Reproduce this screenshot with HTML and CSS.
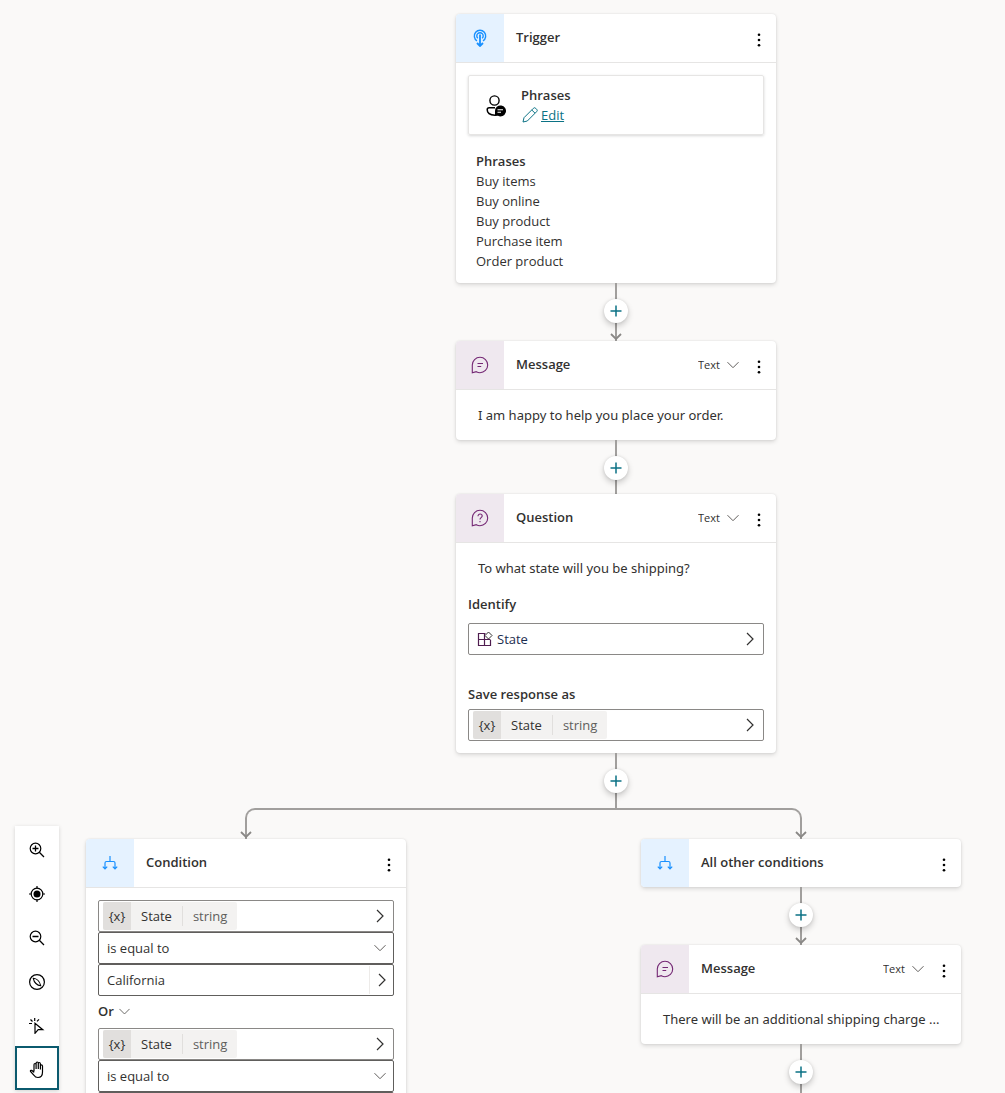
FILE: index.html
```html
<!DOCTYPE html>
<html lang="en">
<head>
<meta charset="utf-8">
<meta name="viewport" content="width=device-width, initial-scale=1">
<title>Topic authoring canvas</title>
<link rel="stylesheet" href="styles.css">
</head>
<body>
<svg class="sprite" aria-hidden="true">
  <symbol id="more" viewBox="0 0 16 16"><circle cx="8" cy="2" r="1.5"/><circle cx="8" cy="8" r="1.5"/><circle cx="8" cy="14" r="1.5"/></symbol>
  <symbol id="down" viewBox="0 0 12 12"><path d="M.5 3.200 6 8.700l5.500-5.500" fill="none" stroke="currentColor"/></symbol>
  <symbol id="right" viewBox="0 0 14 14"><path d="M4 1l6 6-6 6" fill="none" stroke="currentColor" stroke-width="1.200"/></symbol>
  <symbol id="plus" viewBox="0 0 12 12"><path d="M6 .5v11M.5 6h11" fill="none" stroke="currentColor" stroke-width="1.500"/></symbol>
  <symbol id="arrowhead" viewBox="0 0 12 8"><path d="M1 1l5 5 5-5" fill="none" stroke="currentColor" stroke-width="1.800"/></symbol>
  <symbol id="message" viewBox="0 0 18 18"><path d="M1.300 16.700V9A7.700 7.700 0 1 1 9 16.700c-1.400 0-2.600-.4-3.700-1zM6.500 7.500h5.500M6.500 10.500h3.700" fill="none" stroke="currentColor" stroke-width="1.100"/></symbol>
  <symbol id="question" viewBox="0 0 18 18"><path d="M1.300 16.700V9A7.700 7.700 0 1 1 9 16.700c-1.400 0-2.600-.4-3.700-1zM7 7.200c0-3 4.200-2.600 4.200-.2C11.200 8.700 9 8.700 9 10.500M9 12v1.300" fill="none" stroke="currentColor" stroke-width="1.100"/></symbol>
  <symbol id="branch" viewBox="0 0 18 18"><path d="M9 2v5.500M4 14.500V9q0-1.500 1.500-1.500h7Q14 7.500 14 9v5.500M1.800 12.600 4 14.800l2.200-2.200M11.800 12.600l2.200 2.200 2.200-2.200" fill="none" stroke="currentColor" stroke-width="1.200"/></symbol>
  <symbol id="trigger" viewBox="0 0 14 18"><path d="M4 11.800a5.700 5.700 0 1 1 6 0M4.800 9.200a3.200 3.200 0 1 1 4.400 0" fill="none" stroke="currentColor" stroke-width="1.400"/><path d="M7 5.500v10.800M4 14l3 3 3-3" fill="none" stroke="currentColor" stroke-width="1.800"/></symbol>
  <symbol id="person" viewBox="0 0 20 22"><circle cx="8.500" cy="5.500" r="4.600" fill="none" stroke="currentColor" stroke-width="1.400"/><path d="M9 12.800H3.200q-2 0-2 2c0 3.500 3.300 5.200 7.800 5.400" fill="none" stroke="currentColor" stroke-width="1.500"/><path d="M9 21v-5a5.500 5.500 0 1 1 3 4.800z" fill="currentColor"/><path d="M11.500 14.800H17M11.500 17.200h3.500" stroke="#fff" stroke-width="1.100"/></symbol>
  <symbol id="pencil" viewBox="0 0 16 16"><path d="M1 15l1-4.300L11.300 1.400a1.700 1.700 0 0 1 2.500 0l.8.800a1.700 1.700 0 0 1 0 2.500L5.300 14zM9.800 3l3.200 3.200" fill="none" stroke="currentColor"/></symbol>
  <symbol id="entity" viewBox="0 0 16 16"><path d="M8.500 2.500H1.500v12h12V9M7.500 2.500v12M1.500 8.500h12" fill="none" stroke="#4f1d4f" stroke-width="1.200"/><path d="M11.500 1l3.500 3.500L11.500 8 8 4.500z" fill="#fff" stroke="#323130"/></symbol>
  <symbol id="zoomin" viewBox="0 0 16 16"><circle cx="6.500" cy="6.500" r="5.300" fill="none" stroke="currentColor" stroke-width="1.200"/><path d="M10.300 10.300 15 15M6.500 3.500v6M3.500 6.500h6" stroke="currentColor" stroke-width="1.300"/></symbol>
  <symbol id="zoomout" viewBox="0 0 16 16"><circle cx="6.500" cy="6.500" r="5.300" fill="none" stroke="currentColor" stroke-width="1.200"/><path d="M10.300 10.300 15 15M3.500 6.500h6" stroke="currentColor" stroke-width="1.300"/></symbol>
  <symbol id="target" viewBox="0 0 16 16"><circle cx="8" cy="8" r="5.800" fill="none" stroke="currentColor" stroke-width="1.200"/><circle cx="8" cy="8" r="3.500"/><path d="M8 0v2.500M8 13.500V16M0 8h2.500M13.500 8H16" stroke="currentColor" stroke-width="1.200"/></symbol>
  <symbol id="compass" viewBox="0 0 16 16"><circle cx="8" cy="8" r="7.400" fill="none" stroke="currentColor" stroke-width="1.200"/><path d="M4.300 4.300c3.200.2 6.500 3 7.400 7.400-3.500-.2-6.700-3.200-7.400-7.400z" fill="none" stroke="currentColor" stroke-width="1.100"/></symbol>
  <symbol id="cursor" viewBox="0 0 16 16"><path d="M6 5.300v10l3.200-3.600h4.600zM5.700 0v3M0 5.500h3M1.500 1.500l2 2M10 1.300 8 3.300" fill="none" stroke="currentColor" stroke-width="1.200"/></symbol>
  <symbol id="hand" viewBox="0 0 16 18"><path d="M5 10.500V3.700q0-1.200 1-1.200t1.100 1.200V8V2.200Q7.100 1 8.200 1t1.100 1.200V8V2.700q0-1.200 1-1.200t1.100 1.200V8.500V5q0-1.100 1-1.100t1.100 1.100v6q0 5.500-4.500 5.500-2.800 0-4-2.200L1.500 10.500q-.4-1.500 1-1.200 1.400.4 2.500 2.200" fill="none" stroke="currentColor" stroke-width="1.200"/></symbol>
</svg>

<main class="canvas">
  <section class="lane lane-main">
    <article class="card">
      <header class="head">
        <span class="tile blue"><svg class="i-trigger"><use href="#trigger"/></svg></span>
        <h2>Trigger</h2>
        <button class="more" aria-label="Trigger options"><svg><use href="#more"/></svg></button>
      </header>
      <div class="body">
        <div class="source">
          <svg class="i-person"><use href="#person"/></svg>
          <div>
            <strong>Phrases</strong>
            <a class="edit" href="#edit"><svg><use href="#pencil"/></svg><span>Edit</span></a>
          </div>
        </div>
        <div class="phrases">
          <strong>Phrases</strong>
          <ul><li>Buy items</li><li>Buy online</li><li>Buy product</li><li>Purchase item</li><li>Order product</li></ul>
        </div>
      </div>
    </article>
    <div class="link long"><button class="add" aria-label="Add node"><svg><use href="#plus"/></svg></button><svg class="tip"><use href="#arrowhead"/></svg></div>
    <article class="card">
      <header class="head">
        <span class="tile purple"><svg><use href="#message"/></svg></span>
        <h2>Message</h2>
        <span class="pick type"><select aria-label="Message type"><option>Text</option></select><svg><use href="#down"/></svg></span>
        <button class="more" aria-label="Message options"><svg><use href="#more"/></svg></button>
      </header>
      <p class="say">I am happy to help you place your order.</p>
    </article>
    <div class="link"><button class="add" aria-label="Add node"><svg><use href="#plus"/></svg></button></div>
    <article class="card">
      <header class="head">
        <span class="tile purple"><svg><use href="#question"/></svg></span>
        <h2>Question</h2>
        <span class="pick type"><select aria-label="Question type"><option>Text</option></select><svg><use href="#down"/></svg></span>
        <button class="more" aria-label="Question options"><svg><use href="#more"/></svg></button>
      </header>
      <p class="say">To what state will you be shipping?</p>
      <div class="form">
        <label for="identify">Identify</label>
        <button class="field entity" id="identify"><svg class="i-entity"><use href="#entity"/></svg><span>State</span><svg class="go"><use href="#right"/></svg></button>
        <label class="second" for="save">Save response as</label>
        <button class="field" id="save"><span class="var"><b>{x}</b><span>State</span><i>string</i></span><svg class="go"><use href="#right"/></svg></button>
      </div>
    </article>
    <div class="link to-fork"><button class="add" aria-label="Add node"><svg><use href="#plus"/></svg></button></div>
  </section>

  <div class="fork"><svg class="tip"><use href="#arrowhead"/></svg><svg class="tip"><use href="#arrowhead"/></svg></div>

  <section class="lane lane-if">
    <article class="card">
      <header class="head">
        <span class="tile blue"><svg><use href="#branch"/></svg></span>
        <h2>Condition</h2>
        <button class="more" aria-label="Condition options"><svg><use href="#more"/></svg></button>
      </header>
      <div class="body">
        <button class="field" aria-label="Variable State, string"><span class="var"><b>{x}</b><span>State</span><i>string</i></span><svg class="go"><use href="#right"/></svg></button>
        <span class="pick field dark"><select aria-label="Operator"><option>is equal to</option></select><svg><use href="#down"/></svg></span>
        <div class="field dark value"><input aria-label="Value" value="California"><button aria-label="Choose value"><svg class="go"><use href="#right"/></svg></button></div>
        <span class="pick or"><select aria-label="Join"><option>Or</option></select><svg><use href="#down"/></svg></span>
        <button class="field" aria-label="Variable State, string"><span class="var"><b>{x}</b><span>State</span><i>string</i></span><svg class="go"><use href="#right"/></svg></button>
        <span class="pick field dark"><select aria-label="Operator"><option>is equal to</option></select><svg><use href="#down"/></svg></span>
        <div class="field dark value"><input aria-label="Value"><button aria-label="Choose value"><svg class="go"><use href="#right"/></svg></button></div>
      </div>
    </article>
  </section>

  <section class="lane lane-else">
    <article class="card">
      <header class="head">
        <span class="tile blue"><svg><use href="#branch"/></svg></span>
        <h2>All other conditions</h2>
        <button class="more" aria-label="Branch options"><svg><use href="#more"/></svg></button>
      </header>
    </article>
    <div class="link long"><button class="add" aria-label="Add node"><svg><use href="#plus"/></svg></button><svg class="tip"><use href="#arrowhead"/></svg></div>
    <article class="card">
      <header class="head">
        <span class="tile purple"><svg><use href="#message"/></svg></span>
        <h2>Message</h2>
        <span class="pick type"><select aria-label="Message type"><option>Text</option></select><svg><use href="#down"/></svg></span>
        <button class="more" aria-label="Message options"><svg><use href="#more"/></svg></button>
      </header>
      <p class="say">There will be an additional shipping charge ...</p>
    </article>
    <div class="link"><button class="add" aria-label="Add node"><svg><use href="#plus"/></svg></button></div>
  </section>

  <nav class="tools" aria-label="Canvas tools">
    <button aria-label="Zoom in"><svg><use href="#zoomin"/></svg></button>
    <button aria-label="Reset view"><svg><use href="#target"/></svg></button>
    <button aria-label="Zoom out"><svg><use href="#zoomout"/></svg></button>
    <button aria-label="Mini map"><svg><use href="#compass"/></svg></button>
    <button aria-label="Select"><svg><use href="#cursor"/></svg></button>
    <button class="active" aria-label="Pan" aria-pressed="true"><svg class="i-hand"><use href="#hand"/></svg></button>
  </nav>
</main>
</body>
</html>
```
FILE: styles.css
```css
* { box-sizing: border-box; }

body {
  margin: 0;
  background: #faf9f8;
  color: #323130;
  font: 13px/20px "Open Sans", "Noto Sans", sans-serif;
}

h2, p, ul { margin: 0; padding: 0; }
ul { list-style: none; }
strong, h2, label { font-size: 13px; font-weight: 600; }

button, select, input {
  margin: 0;
  padding: 0;
  border: 0;
  background: none;
  color: inherit;
  font: inherit;
  appearance: none;
}

svg { display: block; width: 16px; height: 16px; flex: none; }
.sprite { display: none; }

.canvas { position: relative; height: 100vh; overflow: hidden; }

/* Lanes sit at their own place on the free canvas; their contents flow. */
.lane { position: absolute; width: 320px; }
.lane-main { left: 456px; top: 14px; }
.lane-if { left: 86px; top: 839px; }
.lane-else { left: 641px; top: 839px; }

.card {
  background: #fff;
  border-radius: 4px;
  box-shadow: 0 2px 4px rgba(0, 0, 0, .13), 0 0 2px rgba(0, 0, 0, .11);
}

.head { display: flex; align-items: center; height: 48px; }
.head:not(:last-child) { height: 49px; border-bottom: 1px solid #e6e5e4; }
.head h2 { flex: 1; padding: 0 12px 2px; }

.tile {
  display: grid;
  place-items: center;
  align-self: stretch;
  width: 48px;
  border-top-left-radius: 4px;
}
.head:last-child .tile { border-bottom-left-radius: 4px; }
.tile svg { width: 18px; height: 18px; }
.tile .i-trigger { width: 14px; }
.blue { background: #e5f2ff; color: #1890ff; }
.purple { background: #efe8ef; color: #742774; }

.more { display: grid; place-items: center; width: 34px; height: 32px; padding-top: 4px; }
.more svg { width: 16px; height: 14px; color: #000; }

.body { padding: 12px; }
.say { padding: 15px 22px; font-family: "Noto Sans", "Open Sans", sans-serif; white-space: nowrap; }

.source {
  display: flex;
  align-items: center;
  gap: 15px;
  height: 60px;
  padding: 0 17px;
  border: 1px solid #e6e5e4;
  border-radius: 2px;
  box-shadow: 0 1px 3px rgba(0, 0, 0, .16);
}
.source strong { display: block; }
.i-person { width: 20px; height: 24px; padding-top: 2px; color: #000; }
.edit { display: flex; align-items: center; gap: 3px; padding-left: 1px; color: #0b7285; text-decoration: none; }
.edit span { text-decoration: underline; }
.phrases { padding: 16px 8px 0; }

.link {
  display: flex;
  flex-direction: column;
  align-items: center;
  height: 54px;
  padding-top: 16px;
  background: linear-gradient(#a19f9d, #a19f9d) center / 2px 100% no-repeat;
}
.link.long { height: 58px; justify-content: space-between; }
.link.to-fork { height: 56px; }
.add {
  display: grid;
  place-items: center;
  width: 24px;
  height: 24px;
  border-radius: 50%;
  background: #fff;
  color: #0b7285;
  box-shadow: 0 3px 6px rgba(0, 0, 0, .2), 0 0 3px rgba(0, 0, 0, .1);
}
.add svg { width: 12px; height: 12px; }
.tip { width: 12px; height: 8px; color: #8a8886; }

.fork {
  position: absolute;
  left: 245px;
  top: 808px;
  display: flex;
  justify-content: space-between;
  align-items: flex-end;
  width: 557px;
  height: 31px;
  border: 2px solid #a19f9d;
  border-bottom: 0;
  border-radius: 10px 10px 0 0;
}
.fork .tip { margin: 0 -7px; }

.pick { display: grid; align-items: center; }
.pick select, .pick svg { grid-area: 1 / 1; }
.pick select { width: 100%; }
.pick svg { justify-self: end; width: 12px; height: 12px; color: #605e5c; pointer-events: none; }
.type { width: 41px; margin-right: 3px; font-size: 11px; }

.form { padding: 0 12px 12px; }
.form label { display: block; margin: 1px 0 9px; }
.form .second { margin: 29px 0 5px; }

.field {
  display: flex;
  align-items: center;
  width: 100%;
  height: 32px;
  border: 1px solid #8a8886;
  border-radius: 2px;
  padding: 0 6px 0 4px;
  text-align: left;
}
.field.dark { border-color: #605e5c; }
.field .go { margin-left: auto; }
.go { width: 14px; height: 14px; color: #323130; }
.entity { padding-left: 8px; gap: 4px; }
.entity span { color: #1b2d4f; }
.field.pick { display: grid; padding: 0 7px 0 8px; }

.var { display: flex; align-items: center; height: 28px; border-radius: 2px; background: #f3f2f1; }
.var b { width: 28px; line-height: 28px; border-radius: 2px 0 0 2px; background: #e1dfdd; text-align: center; font-weight: 400; }
.var span { padding: 0 10px; }
.var i { padding: 0 10px; border-left: 1px solid #e1dfdd; color: #605e5c; font-style: normal; }

.value { padding: 0 0 0 8px; }
.value input { flex: 1; min-width: 0; }
.value button { display: grid; place-items: center; width: 24px; height: 28px; border-left: 1px solid #edebe9; }
.value .go { margin: 0; }

.or { width: 32px; height: 32px; padding-bottom: 2px; font-weight: 600; }
.or svg { width: 11px; height: 11px; }

.tools {
  position: fixed;
  left: 15px;
  bottom: 3px;
  width: 44px;
  background: #fff;
  box-shadow: 0 1px 4px rgba(0, 0, 0, .16);
}
.tools button { display: grid; place-items: center; width: 44px; height: 44px; padding-top: 4px; color: #000; }
.tools .active { border: 2px solid #0b5a6e; }
.tools .i-hand { height: 18px; }
```
